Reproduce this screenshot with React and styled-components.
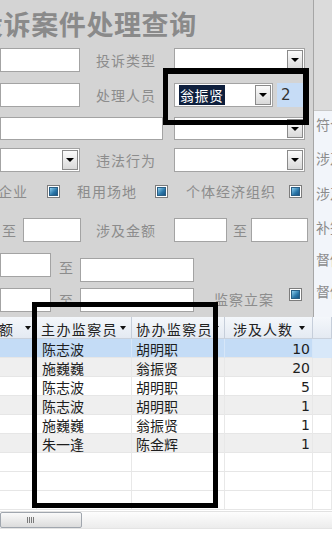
import React from 'react';
import styled, { createGlobalStyle } from 'styled-components';

const Global = createGlobalStyle`
  html, body { margin: 0; padding: 0; }
  body {
    width: 332px; height: 533px; overflow: hidden; background: #fff;
    font-family: "Noto Sans CJK SC", "Noto Sans", sans-serif;
  }
`;

const Screen = styled.div`
  position: relative;
  width: 332px; height: 533px; overflow: hidden;
  display: flex; flex-direction: column;
`;

const Top = styled.div`
  display: flex; height: 317px; flex: none;
`;

const Form = styled.div`
  width: 313px; flex: none; background: #d4d4d4; overflow: hidden;
  display: flex; flex-direction: column;
`;

const Title = styled.div`
  height: 48px; margin-left: -24px; font-size: 27px; font-weight: 700; letter-spacing: 0.6px;
  color: #8a8a8a; line-height: 48px; white-space: nowrap; flex: none;
`;

const Row = styled.div`
  display: flex; align-items: ${p => p.$align || 'center'};
  height: ${p => p.$h}px; margin-top: ${p => p.$mt || 0}px; flex: none;
`;

const Field = styled.div`
  flex: none; box-sizing: border-box;
  width: ${p => p.$w}px; height: ${p => p.$h || 24}px;
  margin-left: ${p => p.$ml || 0}px; margin-top: ${p => p.$mt || 0}px;
  background: #fff; border: 1px solid #a3a3a3;
`;

const Combo = styled.div`
  flex: none; box-sizing: border-box; display: flex; align-items: center;
  width: ${p => p.$w}px; height: ${p => p.$h || 24}px;
  margin-left: ${p => p.$ml || 0}px;
  background: #fff; border: 1px solid #a3a3a3; padding: 1px;
`;

const ComboValue = styled.div`
  flex: 1; padding-left: 3px; font-size: 14px; line-height: 16px; color: #000;
`;

const Selected = styled.span`
  background: #0e1f3d; color: #fff; padding: 0 1px; letter-spacing: 0.5px;
`;

const DropButton = styled.div`
  flex: none; width: 16px; align-self: stretch; box-sizing: border-box;
  border: 1px solid #8a8a8a; background: linear-gradient(#fbfbfb, #d9d9d9);
  display: flex; align-items: center; justify-content: center;
  &::after {
    content: ''; border-left: 4px solid transparent; border-right: 4px solid transparent;
    border-top: 4px solid #000;
  }
`;

const CountBox = styled.div`
  flex: none; box-sizing: border-box; width: 30px; height: 24px; margin-left: 4px;
  background: #c6dcf6; font-size: 15px; line-height: 24px; padding-left: 4px; color: #333;
  font-family: "DejaVu Sans", sans-serif;
`;

const Label = styled.div`
  flex: none; width: ${p => p.$w || 'auto'}${p => (p.$w ? 'px' : '')};
  margin-left: ${p => p.$ml || 0}px; margin-top: ${p => p.$mt || 0}px;
  font-size: 14px; letter-spacing: 1px; color: #8c8c8c; white-space: nowrap; line-height: 18px;
`;

const Check = styled.span`
  flex: none; display: block; box-sizing: border-box; width: 13px; height: 13px;
  margin-left: ${p => p.$ml || 0}px; margin-top: ${p => p.$mt || 0}px;
  border: 1px solid #7c7c7c; background: #fff; padding: 1px;
  &::after {
    content: ''; display: block; width: 100%; height: 100%; box-sizing: border-box;
    border: 1px solid #2b5f85; background: linear-gradient(135deg, #8fd0f0, #2a76a8 60%, #1b5585);
  }
`;

const Side = styled.div`
  width: 19px; flex: none; box-sizing: border-box; border-left: 1px solid #a6a6a6;
  display: flex; flex-direction: column; overflow: hidden;
`;

const SideTop = styled.div`
  height: 110px; flex: none; background: #dbdbdb; border-bottom: 1px solid #c8c8c8;
`;

const SideList = styled.div`
  flex: 1; background: #f2f5fa; display: flex; flex-direction: column;
`;

const SideItem = styled.div`
  margin-top: ${p => p.$mt}px; padding-left: 2px; height: 18px; line-height: 18px;
  font-size: 14px; color: #8c8c8c; white-space: nowrap;
`;

const cols = '37px 95px 93px 88px 19px';

const Header = styled.div`
  display: grid; grid-template-columns: ${cols}; height: 22px; flex: none;
  background: linear-gradient(#f4f7fb, #e4eaf2); border-bottom: 1px solid #c9d1dc;
  box-sizing: border-box;
`;

const HeadCell = styled.div`
  display: flex; align-items: center; justify-content: ${p => p.$end ? 'flex-end' : 'flex-start'};
  box-sizing: border-box; border-right: 1px solid #c6ceda; padding-left: ${p => p.$pl || 0}px;
  font-size: 14px; letter-spacing: ${p => p.$ls || 0}px; color: #222; white-space: nowrap; overflow: hidden;
`;

const HeadText = styled.span`
  margin-right: ${p => p.$mr || 0}px; padding-top: 2px;
`;

const Arrow = styled.span`
  flex: none; margin-left: ${p => p.$auto ? 'auto' : '0'}; margin-right: ${p => p.$mr || 5}px;
  border-left: 3.5px solid transparent; border-right: 3.5px solid transparent; border-top: 4px solid #111;
`;

const Body = styled.div`
  display: flex; flex-direction: column; flex: none;
`;

const DataRow = styled.div`
  display: grid; grid-template-columns: ${cols}; height: 19px; box-sizing: border-box;
  border-bottom: 1px solid #e6e6e6;
  background: ${p => (p.$sel ? '#c4dcf6' : p.$alt ? '#efefef' : '#fff')};
`;

const Cell = styled.div`
  box-sizing: border-box; border-right: 1px solid ${p => (p.$sel ? '#d6e6f8' : '#e8e8e8')};
  font-size: 14px; line-height: 18px; padding-top: 1px; color: #1e1e1e; white-space: nowrap;
  padding-left: ${p => p.$pl || 0}px; padding-right: ${p => p.$pr || 0}px;
  text-align: ${p => (p.$right ? 'right' : 'left')};
  font-family: ${p => (p.$num ? '"DejaVu Sans", sans-serif' : 'inherit')};
  background: ${p => (p.$light ? '#d8e8f9' : 'transparent')};
`;

const ScrollBar = styled.div`
  height: 17px; flex: none; margin-top: 1px; display: flex; box-sizing: border-box;
  background: linear-gradient(#fdfdfd, #ececec); border-top: 1px solid #e2e2e2;
`;

const Thumb = styled.div`
  width: 82px; height: 16px; box-sizing: border-box; border: 1px solid #a0a6ae; border-radius: 2px;
  background: linear-gradient(#fafafa, #dcdcdc); display: flex; align-items: center; justify-content: center;
  gap: 1px; padding-right: 22px;
`;

const Grip = styled.span`
  width: 1px; height: 6px; background: #7a7a7a;
`;

const Foot = styled.div`
  flex: 1; background: #fff; border-top: 1px solid #e4e4e4;
`;

const Mark = styled.div`
  position: absolute; box-sizing: border-box; border-style: solid; border-color: #000;
  left: ${p => p.$x}px; top: ${p => p.$y}px; width: ${p => p.$w}px; height: ${p => p.$h}px;
  border-width: ${p => p.$bw};
`;

const rows = [
  ['陈志波', '胡明职', '10'],
  ['施巍巍', '翁振贤', '20'],
  ['陈志波', '胡明职', '5'],
  ['陈志波', '胡明职', '1'],
  ['施巍巍', '翁振贤', '1'],
  ['朱一逢', '陈金辉', '1'],
  ['', '', ''],
  ['', '', ''],
  ['', '', ''],
];

export default function App() {
  return (
    <Screen>
      <Global />
      <Top>
        <Form>
          <Title>投诉案件处理查询</Title>
          <Row $h={24}>
            <Field $w={80} />
            <Label $ml={16} $w={78}>投诉类型</Label>
            <Combo $w={131}><ComboValue /><DropButton /></Combo>
          </Row>
          <Row $h={24} $mt={11}>
            <Field $w={80} />
            <Label $ml={16} $w={78}>处理人员</Label>
            <Combo $w={99}><ComboValue><Selected>翁振贤</Selected></ComboValue><DropButton /></Combo>
            <CountBox>2</CountBox>
          </Row>
          <Row $h={23} $mt={10}>
            <Field $w={163} $h={23} />
            <Combo $ml={11} $w={131} $h={23}><ComboValue /><DropButton /></Combo>
          </Row>
          <Row $h={24} $mt={8}>
            <Combo $w={80}><ComboValue /><DropButton /></Combo>
            <Label $ml={16} $w={78}>违法行为</Label>
            <Combo $w={131}><ComboValue /><DropButton /></Combo>
          </Row>
          <Row $h={16} $mt={11}>
            <Label $ml={-2} $w={30}>企业</Label>
            <Check $ml={19} />
            <Label $ml={17} $w={60}>租用场地</Label>
            <Check $ml={18} />
            <Label $ml={18} $w={90}>个体经济组织</Label>
            <Check $ml={13} />
          </Row>
          <Row $h={24} $mt={19}>
            <Label $ml={2} $w={15}>至</Label>
            <Field $ml={6} $w={58} />
            <Label $ml={15} $w={78}>涉及金额</Label>
            <Field $w={53} />
            <Label $ml={6} $w={15}>至</Label>
            <Field $ml={3} $w={57} />
          </Row>
          <Row $h={29} $mt={11} $align="flex-start">
            <Field $w={51} />
            <Label $ml={8} $w={15} $mt={5}>至</Label>
            <Field $ml={6} $w={114} $mt={5} />
          </Row>
          <Row $h={24} $mt={6} $align="flex-start">
            <Field $w={51} />
            <Label $ml={8} $w={15} $mt={3}>至</Label>
            <Field $ml={6} $w={114} />
            <Label $ml={20} $w={60} $mt={2}>监察立案</Label>
            <Check $ml={15} />
          </Row>
        </Form>
        <Side>
          <SideTop />
          <SideList>
            <SideItem $mt={4}>符合条件</SideItem>
            <SideItem $mt={16}>涉及人员</SideItem>
            <SideItem $mt={17}>涉及金额</SideItem>
            <SideItem $mt={16}>补签合同</SideItem>
            <SideItem $mt={14}>督促整改</SideItem>
            <SideItem $mt={14}>督促处理</SideItem>
          </SideList>
        </Side>
      </Top>
      <Header>
        <HeadCell $end><HeadText $mr={12}>金额</HeadText><Arrow /></HeadCell>
        <HeadCell $pl={4} $ls={1.4}><HeadText>主办监察员</HeadText><Arrow $auto /></HeadCell>
        <HeadCell $pl={4} $ls={1.4}><HeadText>协办监察员</HeadText><Arrow $auto /></HeadCell>
        <HeadCell $pl={8} $ls={1}><HeadText>涉及人数</HeadText><Arrow $auto $mr={7} /></HeadCell>
        <HeadCell />
      </Header>
      <Body>
        {rows.map((r, i) => (
          <DataRow key={i} $sel={i === 0} $alt={i < 6 && i % 2 === 1}>
            <Cell $sel={i === 0} />
            <Cell $sel={i === 0} $pl={5}>{r[0]}</Cell>
            <Cell $sel={i === 0} $pl={4}>{r[1]}</Cell>
            <Cell $sel={i === 0} $right $pr={2} $num>{r[2]}</Cell>
            <Cell $sel={i === 0} $light={i === 0} />
          </DataRow>
        ))}
      </Body>
      <ScrollBar>
        <Thumb><Grip /><Grip /><Grip /><Grip /></Thumb>
      </ScrollBar>
      <Foot />
      <Mark $x={163} $y={68} $w={146} $h={57} $bw="6px 6px 5px 5px" />
      <Mark $x={32} $y={302} $w={186} $h={206} $bw="5px" />
    </Screen>
  );
}
